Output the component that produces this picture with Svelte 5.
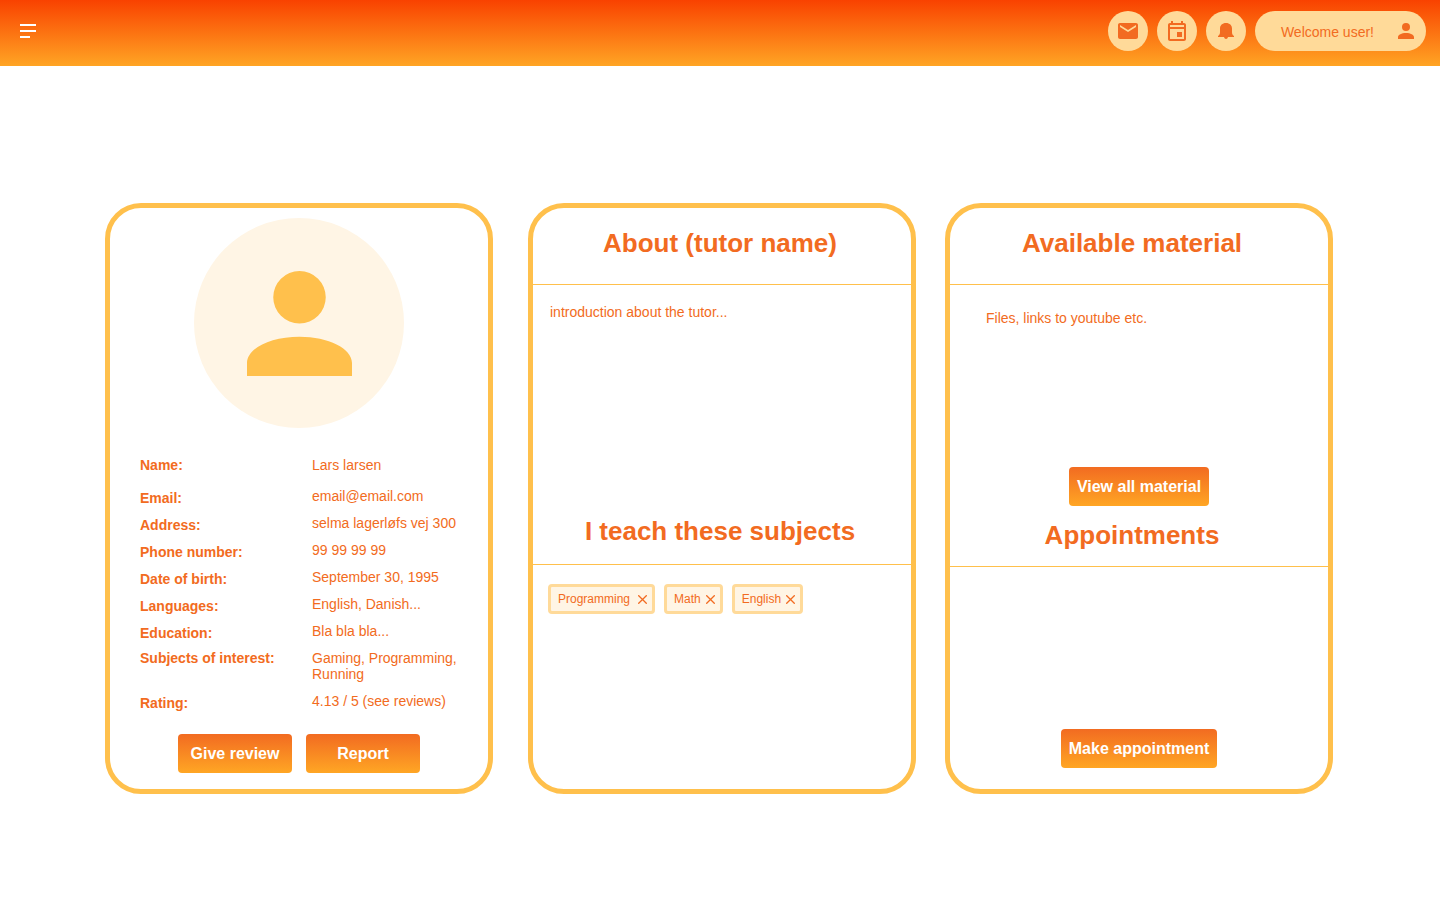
<script>
  const person = 'M12 4a4 4 0 1 1 0 8 4 4 0 0 1 0-8zm0 10c4.42 0 8 1.79 8 4v2H4v-2c0-2.21 3.58-4 8-4z';

  const shortcuts = [
    { label: 'Messages', path: 'M20 4H4c-1.1 0-1.99.9-1.99 2L2 18c0 1.1.9 2 2 2h16c1.1 0 2-.9 2-2V6c0-1.1-.9-2-2-2zm0 4l-8 5-8-5V6l8 5 8-5v2z' },
    { label: 'Calendar', path: 'M19 4h-1V2h-2v2H8V2H6v2H5c-1.11 0-1.99.9-1.99 2L3 20c0 1.1.89 2 2 2h14c1.1 0 2-.9 2-2V6c0-1.1-.9-2-2-2zm0 16H5V10h14v10zm0-12H5V6h14v2zm-7 5h5v5h-5z' },
    { label: 'Notifications', path: 'M12 4C8.3 4 6 6.400 6 9.600V13c0 1.900-.4 3-2 3.900V18h6c.3 1.200 1 2 2 2s1.700-.8 2-2h6v-1.100c-1.600-.9-2-2-2-3.900V9.600C18 6.400 15.700 4 12 4z' }
  ];

  const details = [
    { label: 'Name:', value: 'Lars larsen', level: true, first: true },
    { label: 'Email:', value: 'email@email.com' },
    { label: 'Address:', value: 'selma lagerløfs vej 300' },
    { label: 'Phone number:', value: '99 99 99 99' },
    { label: 'Date of birth:', value: 'September 30, 1995' },
    { label: 'Languages:', value: 'English, Danish...' },
    { label: 'Education:', value: 'Bla bla bla...' },
    { label: 'Subjects of interest:', value: 'Gaming, Programming, Running', level: true },
    { label: 'Rating:', value: '4.13 / 5 (see reviews)' }
  ];

  let subjects = $state(['Programming', 'Math', 'English']);
  const remove = (name) => (subjects = subjects.filter((s) => s !== name));
</script>

<header class="topbar">
  <button class="menu" aria-label="Menu">
    <svg width="16" height="14" viewBox="0 0 16 14"><path d="M0 0h16v2H0zM0 6h16v2H0zM0 12h10v2H0z" /></svg>
  </button>
  <nav class="shortcuts">
    {#each shortcuts as item}
      <button class="round" aria-label={item.label}>
        <svg width="24" height="24" viewBox="0 0 24 24"><path d={item.path} /></svg>
      </button>
    {/each}
    <button class="user">
      <span>Welcome user!</span>
      <svg width="24" height="24" viewBox="0 0 24 24"><path d={person} /></svg>
    </button>
  </nav>
</header>

<main>
  <section class="card profile">
    <div class="avatar">
      <svg viewBox="4 4 16 16"><path d={person} /></svg>
    </div>
    <dl>
      {#each details as row}
        <div class="row" class:level={row.level} class:first={row.first}>
          <dt>{row.label}</dt>
          <dd>{row.value}</dd>
        </div>
      {/each}
    </dl>
    <div class="actions">
      <button class="action">Give review</button>
      <button class="action">Report</button>
    </div>
  </section>

  <div class="card about">
    <section class="upper">
      <h2>About (tutor name)</h2>
      <p>introduction about the tutor...</p>
    </section>
    <section class="lower">
      <h2>I teach these subjects</h2>
      <ul>
        {#each subjects as subject, i}
          <li class:wide={i === 0}>
            {subject}
            <button class="remove" aria-label="Remove {subject}" onclick={() => remove(subject)}>
              <svg width="9" height="9" viewBox="0 0 9 9"><path d="M.3.3l8.400 8.400M8.700.3L.3 8.700" /></svg>
            </button>
          </li>
        {/each}
      </ul>
    </section>
  </div>

  <div class="card resources">
    <section class="upper">
      <h2>Available material</h2>
      <p>Files, links to youtube etc.</p>
      <button class="action">View all material</button>
    </section>
    <section class="lower">
      <h2>Appointments</h2>
      <button class="action">Make appointment</button>
    </section>
  </div>
</main>

<style>
  :global(body) {
    background: #fff;
    color: #f26b21;
    font: 14px/16px "Liberation Sans", Arial, sans-serif;
  }
  button {
    border: 0;
    padding: 0;
    background: none;
    color: inherit;
    font: inherit;
    cursor: pointer;
  }
  svg {
    display: block;
    fill: currentColor;
  }
  .topbar {
    display: flex;
    align-items: center;
    justify-content: space-between;
    box-sizing: border-box;
    height: 66px;
    padding: 0 14px 4px 20px;
    background: linear-gradient(#f94200, #ffa524);
  }
  .menu {
    color: #fff;
  }
  .shortcuts {
    display: flex;
    gap: 9px;
  }
  .round {
    display: grid;
    place-items: center;
    width: 40px;
    height: 40px;
    border-radius: 50%;
    background: #ffda99;
  }
  .user {
    display: flex;
    align-items: center;
    gap: 20px;
    height: 40px;
    padding: 0 8px 0 26px;
    border-radius: 20px;
    background: #ffda99;
  }
  .user span {
    padding-top: 2px;
  }
  main {
    display: flex;
    gap: 29px;
    padding: 137px 107px 106px 105px;
  }
  .card {
    display: flex;
    flex: 1 1 0;
    flex-direction: column;
    border: 5px solid #ffc04c;
    border-radius: 36px;
  }
  .profile {
    align-items: center;
    margin-right: 6px;
    padding: 10px 0 16px;
  }
  .avatar {
    display: grid;
    place-items: center;
    width: 210px;
    height: 210px;
    border-radius: 50%;
    background: #fff5e5;
    color: #ffc04c;
  }
  .avatar svg {
    width: 105px;
    height: 105px;
  }
  dl {
    display: flex;
    flex-direction: column;
    align-self: stretch;
    gap: 11px;
    margin: 29px 0 25px;
    padding: 0 26px 0 30px;
  }
  .row {
    display: grid;
    grid-template-columns: 172px 1fr;
  }
  .first {
    margin-bottom: 4px;
  }
  dt {
    font-weight: bold;
    height: 14px;
    padding-top: 2px;
  }
  .level dt {
    padding-top: 0;
  }
  dd {
    margin: 0;
  }
  .actions {
    display: flex;
    gap: 14px;
  }
  .action {
    min-width: 114px;
    height: 39px;
    padding: 0 8px;
    border-radius: 4px;
    background: linear-gradient(#f26b21, #ffa624);
    color: #fff;
    font-size: 16px;
    font-weight: bold;
  }
  h2 {
    margin: 0;
    border-bottom: 1px solid #ffc04c;
    font-size: 26px;
    line-height: 30px;
    text-align: center;
  }
  p {
    margin: 0;
  }
  .upper {
    display: flex;
    flex-direction: column;
  }
  .upper h2 {
    padding: 20px 0 26px;
  }
  .lower {
    display: flex;
    flex: 1;
    flex-direction: column;
  }
  .about .upper {
    min-height: 308px;
  }
  .about .upper p {
    padding: 19px 17px;
  }
  .about .lower h2 {
    padding-bottom: 18px;
  }
  .about h2 {
    padding-right: 4px;
  }
  .resources .upper {
    min-height: 298px;
    padding-bottom: 14px;
  }
  .resources .upper p {
    padding: 25px 36px;
  }
  .resources h2 {
    padding-right: 14px;
  }
  .resources .lower h2 {
    padding-bottom: 16px;
  }
  .resources .action {
    align-self: center;
    margin-top: auto;
  }
  .resources .lower {
    padding-bottom: 21px;
  }
  ul {
    display: flex;
    flex-wrap: wrap;
    gap: 9px;
    margin: 0;
    padding: 19px 15px;
    list-style: none;
  }
  li {
    display: flex;
    align-items: center;
    gap: 5px;
    box-sizing: border-box;
    height: 30px;
    padding: 0 5px 0 7px;
    border: 3px solid #ffda99;
    border-radius: 4px;
    background: #fff5e5;
    font-size: 12px;
  }
  .wide {
    gap: 8px;
  }
  .remove svg {
    fill: none;
    stroke: currentColor;
    stroke-width: 1.3;
  }
</style>
